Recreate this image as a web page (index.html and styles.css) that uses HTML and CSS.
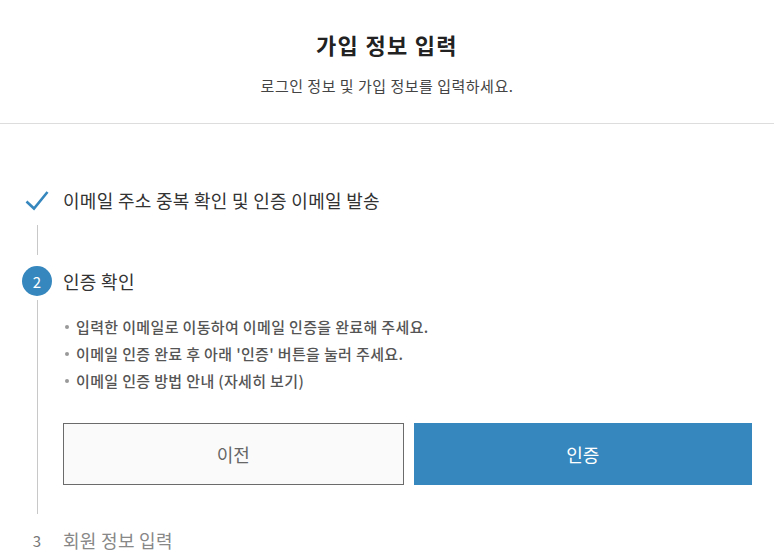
FILE: index.html
```html
<!DOCTYPE html>
<html>
<head>
  <meta charset="utf-8">
  <title>가입 정보 입력</title>
  <link rel="stylesheet" href="styles.css">
</head>
<body>
  <div class="header">
    <h1>가입 정보 입력</h1>
    <p>로그인 정보 및 가입 정보를 입력하세요.</p>
  </div>

  <div class="steps">
    <div class="step done">
      <div class="step-head">
        <span class="mark">
          <svg width="30" height="30" viewBox="0 0 30 30"><polyline points="4.5,16.5 12,23.5 25.5,7" fill="none" stroke="#3587be" stroke-width="2.6"/></svg>
        </span>
        <span class="label">이메일 주소 중복 확인 및 인증 이메일 발송</span>
      </div>
      <div class="connector"></div>
    </div>

    <div class="step active">
      <div class="step-head">
        <span class="mark num">2</span>
        <span class="label">인증 확인</span>
      </div>
      <div class="step-body">
        <ul class="notes">
          <li>입력한 이메일로 이동하여 이메일 인증을 완료해 주세요.</li>
          <li>이메일 인증 완료 후 아래 '인증' 버튼을 눌러 주세요.</li>
          <li>이메일 인증 방법 안내 (자세히 보기)</li>
        </ul>
        <div class="buttons">
          <button class="btn prev">이전</button>
          <button class="btn primary">인증</button>
        </div>
      </div>
    </div>

    <div class="step todo">
      <div class="step-head">
        <span class="mark">3</span>
        <span class="label">회원 정보 입력</span>
      </div>
    </div>
  </div>
</body>
</html>
```

FILE: styles.css
```css
body { margin: 0; font-family: "Noto Sans CJK KR", "Noto Sans", sans-serif; color: #333; background: #fff; }

.header { text-align: center; padding: 29px 0 27px; border-bottom: 1px solid #ddd; }
.header h1 { margin: 0; font-size: 22px; line-height: 30px; font-weight: bold; letter-spacing: 1.3px; color: #222; }
.header p { margin: 17px 0 0; font-size: 15px; line-height: 20px; letter-spacing: 0.5px; color: #444; }

.steps { padding: 61px 22px 0; }
.step-head { display: flex; align-items: center; gap: 11px; height: 30px; }
.mark { width: 30px; height: 30px; display: flex; align-items: center; justify-content: center; flex: none; }
.mark.num { background: #3587be; color: #fff; border-radius: 50%; font-size: 15px; }
.label { font-size: 18px; letter-spacing: 0.3px; color: #333; }

.connector { margin: 10px 0 11px 15px; height: 30px; border-left: 1px solid #c8c8c8; }

.step-body { margin: 4px 0 11px 15px; padding: 13px 0 29px 25px; border-left: 1px solid #c8c8c8; }
.notes { list-style: none; margin: 0; padding: 0; }
.notes li { position: relative; padding-left: 13px; font-size: 15px; line-height: 27px; letter-spacing: 0.35px; font-weight: 500; color: #555; }
.notes li::before { content: ""; position: absolute; left: 2px; top: 12px; width: 4px; height: 4px; border-radius: 50%; background: #999; }

.buttons { display: flex; gap: 10px; margin-top: 29px; }
.btn { flex: 1; height: 62px; font-family: inherit; font-size: 18px; border: none; cursor: pointer; }
.btn.prev { background: #fafafa; border: 1px solid #6b6b6b; color: #666; }
.btn.primary { background: #3587be; color: #fff; }

.todo .mark { color: #777; font-size: 15px; }
.todo .label { color: #888; }
```
